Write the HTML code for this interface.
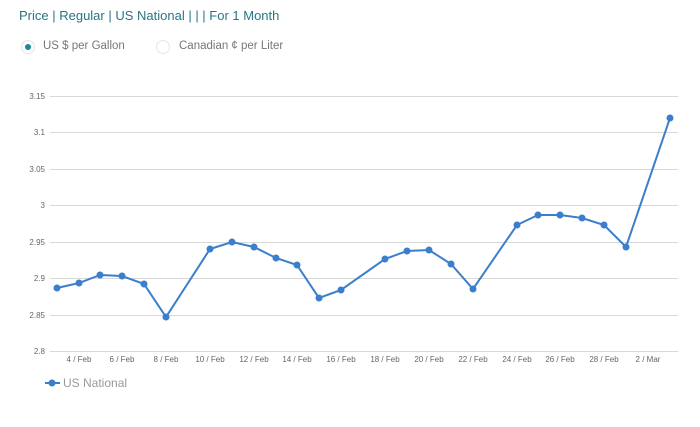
<!DOCTYPE html>
<html><head><style>
body{margin:0;width:700px;height:427px;background:#fff;font-family:"Liberation Sans",sans-serif;position:relative;overflow:hidden}
.t{position:absolute;left:19px;top:8px;font-size:13px;color:#2a7585}
.r{position:absolute;top:40px;font-size:11.5px;color:#777}
.c{position:absolute;top:40px;width:14px;height:14px;border-radius:50%;border:1px solid #e6e6e6;box-sizing:border-box}
</style></head><body>
<div class="t">Price | Regular | US National | | | For 1 Month</div>
<div class="c" style="left:21px"><div style="width:6px;height:6px;border-radius:50%;background:#1a8a98;margin:3px"></div></div>
<div class="r" style="left:43px">US $ per Gallon</div>
<div class="c" style="left:156px"></div>
<div class="r" style="left:179px">Canadian ¢ per Liter</div>
<svg width="700" height="427" style="position:absolute;left:0;top:0" font-family="Liberation Sans, sans-serif">
<g stroke="#d8d8d8" stroke-width="1">
<line x1="50" x2="678" y1="96.5" y2="96.5"/><line x1="50" x2="678" y1="132.5" y2="132.5"/><line x1="50" x2="678" y1="169.5" y2="169.5"/><line x1="50" x2="678" y1="205.5" y2="205.5"/><line x1="50" x2="678" y1="242.5" y2="242.5"/><line x1="50" x2="678" y1="278.5" y2="278.5"/><line x1="50" x2="678" y1="315.5" y2="315.5"/><line x1="50" x2="678" y1="351.5" y2="351.5"/>
</g>
<g font-size="8" fill="#666" text-anchor="end">
<text x="45" y="99">3.15</text><text x="45" y="135">3.1</text><text x="45" y="172">3.05</text><text x="45" y="208">3</text><text x="45" y="245">2.95</text><text x="45" y="281">2.9</text><text x="45" y="318">2.85</text><text x="45" y="354">2.8</text>
</g>
<g font-size="8" fill="#666" text-anchor="middle">
<text x="79" y="362">4 / Feb</text><text x="122" y="362">6 / Feb</text><text x="166" y="362">8 / Feb</text><text x="210" y="362">10 / Feb</text><text x="254" y="362">12 / Feb</text><text x="297" y="362">14 / Feb</text><text x="341" y="362">16 / Feb</text><text x="385" y="362">18 / Feb</text><text x="429" y="362">20 / Feb</text><text x="473" y="362">22 / Feb</text><text x="517" y="362">24 / Feb</text><text x="560" y="362">26 / Feb</text><text x="604" y="362">28 / Feb</text><text x="648" y="362">2 / Mar</text>
</g>
<polyline fill="none" stroke="#3b7fcc" stroke-width="2" points="57,288 79,283 100,275 122,276 144,284 166,317 210,249 232,242 254,247 276,258 297,265 319,298 341,290 385,259 407,251 429,250 451,264 473,289 517,225 538,215 560,215 582,218 604,225 626,247 670,118"/>
<g fill="#3b7fcc">
<circle cx="57" cy="288" r="3.5"/><circle cx="79" cy="283" r="3.5"/><circle cx="100" cy="275" r="3.5"/><circle cx="122" cy="276" r="3.5"/><circle cx="144" cy="284" r="3.5"/><circle cx="166" cy="317" r="3.5"/><circle cx="210" cy="249" r="3.5"/><circle cx="232" cy="242" r="3.5"/><circle cx="254" cy="247" r="3.5"/><circle cx="276" cy="258" r="3.5"/><circle cx="297" cy="265" r="3.5"/><circle cx="319" cy="298" r="3.5"/><circle cx="341" cy="290" r="3.5"/><circle cx="385" cy="259" r="3.5"/><circle cx="407" cy="251" r="3.5"/><circle cx="429" cy="250" r="3.5"/><circle cx="451" cy="264" r="3.5"/><circle cx="473" cy="289" r="3.5"/><circle cx="517" cy="225" r="3.5"/><circle cx="538" cy="215" r="3.5"/><circle cx="560" cy="215" r="3.5"/><circle cx="582" cy="218" r="3.5"/><circle cx="604" cy="225" r="3.5"/><circle cx="626" cy="247" r="3.5"/><circle cx="670" cy="118" r="3.5"/>
<line x1="45" x2="60" y1="383" y2="383" stroke="#3b7fcc" stroke-width="2"/><circle cx="52" cy="383" r="3.5"/>
</g>
<text x="63" y="387" font-size="12" fill="#999">US National</text>
</svg>
</body></html>
